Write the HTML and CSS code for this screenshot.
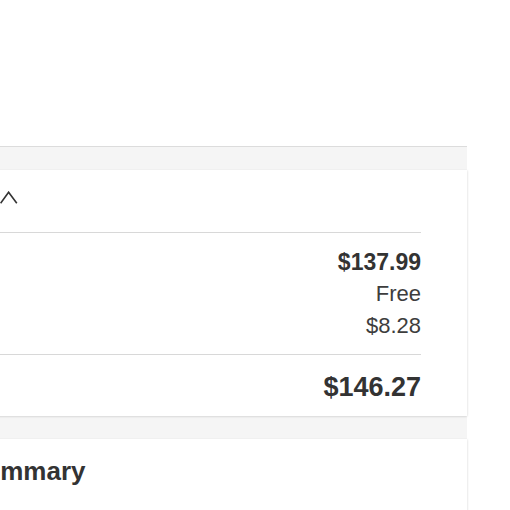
FILE: index.html
```html
<!DOCTYPE html>
<html lang="en">
<head>
<meta charset="utf-8">
<title>Order summary</title>
<link rel="stylesheet" href="styles.css">
</head>
<body>
<div class="top"></div>
<main class="column">
  <section class="card summary">
    <div class="card-head">
      <button class="toggle" aria-label="Collapse">
        <svg width="18" height="13" viewBox="0 0 18 13" aria-hidden="true"><path d="M0.6 12.2 L8.6 1.2 L16.8 12.2" fill="none" stroke="#333" stroke-width="1.6" stroke-linejoin="miter"/></svg>
      </button>
    </div>
    <div class="lines">
      <div class="row strong">$137.99</div>
      <div class="row">Free</div>
      <div class="row">$8.28</div>
    </div>
    <div class="total">
      <div class="row grand">$146.27</div>
    </div>
  </section>
  <section class="card next">
    <h2 class="heading">Order Summary</h2>
  </section>
</main>
</body>
</html>
```

FILE: styles.css
```css
html, body {
  margin: 0;
  padding: 0;
  background: #fff;
  overflow: hidden;
}
body {
  font-family: "Liberation Sans", Arial, sans-serif;
  color: #333;
}
.top {
  height: 146px;
}
.column {
  margin-left: -135px;
  width: 602px;
  background: #f5f5f5;
  border-top: 1px solid #dcdcdc;
  padding-top: 23px;
  display: flex;
  flex-direction: column;
  gap: 23px;
}
.card {
  background: #fff;
  padding: 0 46px 0 24px;
  box-shadow: 0 1px 2px rgba(0, 0, 0, 0.10), 1px 0 2px rgba(0, 0, 0, 0.05);
}
.card-head {
  height: 63px;
  box-sizing: border-box;
  padding: 21px 0 0 111px;
  border-bottom: 1px solid #d8d8d8;
}
.toggle {
  display: block;
  margin: 0;
  padding: 0;
  border: 0;
  background: none;
  line-height: 0;
}
.lines {
  padding: 13px 0 12px;
  border-bottom: 1px solid #d8d8d8;
}
.row {
  display: flex;
  justify-content: flex-end;
  font-size: 22px;
  line-height: 32px;
  color: #3d3d3d;
}
.row.strong {
  font-size: 23px;
  font-weight: bold;
  color: #333;
}
.total {
  padding: 14px 0 11px;
}
.row.grand {
  font-size: 27px;
  line-height: 36px;
  font-weight: bold;
  color: #333;
}
.next {
  height: 80px;
}
.heading {
  margin: 0;
  padding-top: 16px;
  font-size: 26px;
  line-height: 32px;
  font-weight: bold;
  color: #333;
}
```
